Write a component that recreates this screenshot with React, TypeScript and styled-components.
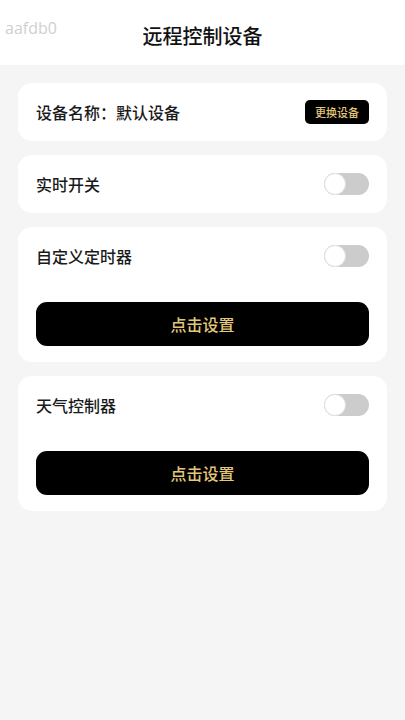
import React, { useState } from 'react'
import styled, { createGlobalStyle } from 'styled-components'

const GlobalStyle = createGlobalStyle`
  html, body {
    margin: 0;
    padding: 0;
    background: #f5f5f5;
    font-family: "Noto Sans CJK SC", "Noto Sans", sans-serif;
  }
`

const Page = styled.div`
  min-height: 720px;
  background: #f5f5f5;
`

const Header = styled.div`
  position: relative;
  height: 65px;
  background: #ffffff;
  display: flex;
  align-items: center;
  justify-content: center;
`

const Tag = styled.span`
  position: absolute;
  left: 5px;
  top: 17px;
  font-family: "Open Sans", "Noto Sans", sans-serif;
  font-size: 16px;
  color: #cfcfcf;
`

const Title = styled.h1`
  margin: 6px 0 0;
  font-size: 20px;
  font-weight: 500;
  color: #111;
`

const List = styled.div`
  display: flex;
  flex-direction: column;
  gap: 14px;
  padding: 18px 18px 0;
`

const Card = styled.div`
  background: #ffffff;
  border-radius: 14px;
  padding: 0 18px;
`

const Row = styled.div`
  height: 58px;
  display: flex;
  align-items: center;
  justify-content: space-between;
`

const Label = styled.span`
  font-size: 16px;
  font-weight: 500;
  color: #1a1a1a;
`

const SmallButton = styled.button`
  height: 24px;
  padding: 0 10px;
  border: none;
  border-radius: 5px;
  background: #000;
  color: #e3c77a;
  font-family: inherit;
  font-size: 11px;
  font-weight: 500;
`

const Track = styled.button<{ $on: boolean }>`
  position: relative;
  width: 45px;
  height: 22px;
  padding: 0;
  border: none;
  border-radius: 11px;
  background: ${(p) => (p.$on ? '#e3c77a' : '#cccccc')};
  cursor: pointer;
`

const Knob = styled.span<{ $on: boolean }>`
  position: absolute;
  top: 0;
  left: ${(p) => (p.$on ? '23px' : '0')};
  width: 22px;
  height: 22px;
  box-sizing: border-box;
  border-radius: 50%;
  background: #fff;
  border: 1px solid #e3e3e3;
`

const WideButton = styled.button`
  display: block;
  width: 100%;
  height: 44px;
  margin: 17px 0 16px;
  border: none;
  border-radius: 11px;
  background: #000;
  color: #e3c77a;
  font-family: inherit;
  font-size: 16px;
  font-weight: 500;
`

function Switch() {
  const [on, setOn] = useState(false)
  return (
    <Track $on={on} onClick={() => setOn(!on)}>
      <Knob $on={on} />
    </Track>
  )
}

export default function App() {
  return (
    <Page>
      <GlobalStyle />
      <Header>
        <Tag>aafdb0</Tag>
        <Title>远程控制设备</Title>
      </Header>
      <List>
        <Card>
          <Row>
            <Label>设备名称：默认设备</Label>
            <SmallButton>更换设备</SmallButton>
          </Row>
        </Card>
        <Card>
          <Row>
            <Label>实时开关</Label>
            <Switch />
          </Row>
        </Card>
        <Card>
          <Row>
            <Label>自定义定时器</Label>
            <Switch />
          </Row>
          <WideButton>点击设置</WideButton>
        </Card>
        <Card>
          <Row>
            <Label>天气控制器</Label>
            <Switch />
          </Row>
          <WideButton>点击设置</WideButton>
        </Card>
      </List>
    </Page>
  )
}
